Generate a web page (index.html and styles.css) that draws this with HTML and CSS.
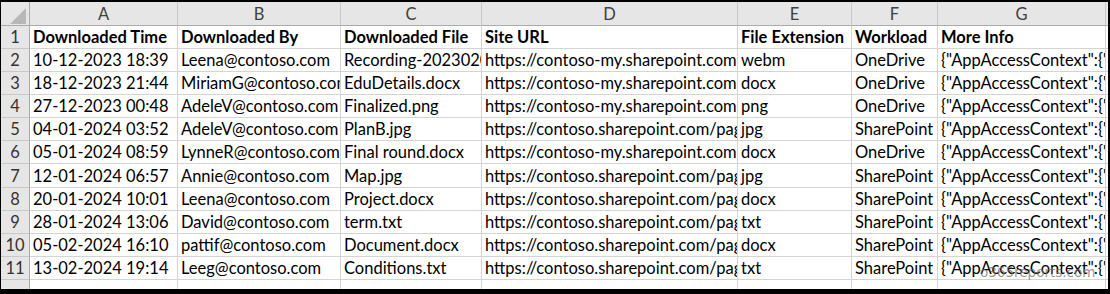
FILE: index.html
```html
<!DOCTYPE html>
<html>
<head>
<meta charset="utf-8">
<link rel="stylesheet" href="styles.css">
</head>
<body>
<div class="frame">
  <div class="sheet">
    <div class="ch corner"><svg width="28" height="23" viewBox="0 0 28 23"><polygon points="9,22 25,22 25,6" fill="#b8b8b8"/></svg></div>
    <div class="ch">A</div><div class="ch">B</div><div class="ch">C</div><div class="ch">D</div><div class="ch">E</div><div class="ch">F</div><div class="ch">G</div><div class="ch end"></div>

    <div class="rh">1</div>
    <div class="c b">Downloaded Time</div><div class="c b">Downloaded By</div><div class="c b">Downloaded File</div><div class="c b">Site URL</div><div class="c b">File Extension</div><div class="c b">Workload</div><div class="c b">More Info</div><div class="c end"></div>

    <div class="rh">2</div>
    <div class="c">10-12-2023 18:39</div><div class="c">Leena@contoso.com</div><div class="c">Recording-20230206_103015.webm</div><div class="c">https://contoso-my.sharepoint.com/personal/leena</div><div class="c">webm</div><div class="c">OneDrive</div><div class="c">{"AppAccessContext":{"ClientAppId"</div><div class="c end"></div>

    <div class="rh">3</div>
    <div class="c">18-12-2023 21:44</div><div class="c">MiriamG@contoso.com</div><div class="c">EduDetails.docx</div><div class="c">https://contoso-my.sharepoint.com/personal/miriamg</div><div class="c">docx</div><div class="c">OneDrive</div><div class="c">{"AppAccessContext":{"ClientAppId"</div><div class="c end"></div>

    <div class="rh">4</div>
    <div class="c">27-12-2023 00:48</div><div class="c">AdeleV@contoso.com</div><div class="c">Finalized.png</div><div class="c">https://contoso-my.sharepoint.com/personal/adelev</div><div class="c">png</div><div class="c">OneDrive</div><div class="c">{"AppAccessContext":{"ClientAppId"</div><div class="c end"></div>

    <div class="rh">5</div>
    <div class="c">04-01-2024 03:52</div><div class="c">AdeleV@contoso.com</div><div class="c">PlanB.jpg</div><div class="c">https://contoso.sharepoint.com/pages</div><div class="c">jpg</div><div class="c">SharePoint</div><div class="c">{"AppAccessContext":{"ClientAppId"</div><div class="c end"></div>

    <div class="rh">6</div>
    <div class="c">05-01-2024 08:59</div><div class="c">LynneR@contoso.com</div><div class="c">Final round.docx</div><div class="c">https://contoso-my.sharepoint.com/personal/lynner</div><div class="c">docx</div><div class="c">OneDrive</div><div class="c">{"AppAccessContext":{"ClientAppId"</div><div class="c end"></div>

    <div class="rh">7</div>
    <div class="c">12-01-2024 06:57</div><div class="c">Annie@contoso.com</div><div class="c">Map.jpg</div><div class="c">https://contoso.sharepoint.com/pages</div><div class="c">jpg</div><div class="c">SharePoint</div><div class="c">{"AppAccessContext":{"ClientAppId"</div><div class="c end"></div>

    <div class="rh">8</div>
    <div class="c">20-01-2024 10:01</div><div class="c">Leena@contoso.com</div><div class="c">Project.docx</div><div class="c">https://contoso.sharepoint.com/pages</div><div class="c">docx</div><div class="c">SharePoint</div><div class="c">{"AppAccessContext":{"ClientAppId"</div><div class="c end"></div>

    <div class="rh">9</div>
    <div class="c">28-01-2024 13:06</div><div class="c">David@contoso.com</div><div class="c">term.txt</div><div class="c">https://contoso.sharepoint.com/pages</div><div class="c">txt</div><div class="c">SharePoint</div><div class="c">{"AppAccessContext":{"ClientAppId"</div><div class="c end"></div>

    <div class="rh">10</div>
    <div class="c">05-02-2024 16:10</div><div class="c">pattif@contoso.com</div><div class="c">Document.docx</div><div class="c">https://contoso.sharepoint.com/pages</div><div class="c">docx</div><div class="c">SharePoint</div><div class="c">{"AppAccessContext":{"ClientAppId"</div><div class="c end"></div>

    <div class="rh">11</div>
    <div class="c">13-02-2024 19:14</div><div class="c">Leeg@contoso.com</div><div class="c">Conditions.txt</div><div class="c">https://contoso.sharepoint.com/pages</div><div class="c">txt</div><div class="c">SharePoint</div><div class="c">{"AppAccessContext":{"ClientAppId"</div><div class="c end"></div>

    <div class="rh last"></div>
    <div class="c last"></div><div class="c last"></div><div class="c last"></div><div class="c last"></div><div class="c last"></div><div class="c last"></div><div class="c last"></div><div class="c last end"></div>
  </div>
  <div class="watermark">o365reports.com</div>
</div>
</body>
</html>
```
FILE: styles.css
```css
html, body {
  margin: 0;
  padding: 0;
  background: #000;
}
.frame {
  position: relative;
  width: 1107px;
  height: 287px;
  margin: 2px 2px 5px 1px;
  background: #fff;
  overflow: hidden;
}
.sheet {
  display: grid;
  grid-template-columns: 29px 148px 163px 141px 256px 114px 86px 168px 2px;
  grid-template-rows: 24px 23px 23px 23px 23px 23px 23px 24px 23px 23px 23px 23px 9px;
  font-family: Lato, "Liberation Sans", sans-serif;
  font-size: 16.5px;
  color: #000;
}
.sheet > div {
  box-sizing: border-box;
  overflow: hidden;
  white-space: nowrap;
}
.ch {
  background: #e6e6e6;
  border-right: 1px solid #c8c8c8;
  border-bottom: 1px solid #ababab;
  color: #404040;
  display: flex;
  align-items: center;
  justify-content: center;
  line-height: 19px;
  padding-top: 1px;
}
.corner {
  border-right: 1px solid #ababab;
  padding: 0;
  align-items: flex-start;
  justify-content: flex-start;
}
.corner svg {
  display: block;
}
.rh {
  background: #e6e6e6;
  border-right: 1px solid #ababab;
  border-bottom: 1px solid #c8c8c8;
  color: #333;
  display: flex;
  align-items: flex-end;
  justify-content: center;
  line-height: 19px;
  padding-bottom: 1px;
}
.c {
  border-right: 1px solid #d4d4d4;
  border-bottom: 1px solid #d4d4d4;
  display: flex;
  align-items: flex-end;
  padding: 0 0 1px 3px;
  line-height: 19px;
}
.c.b {
  font-weight: 700;
}
.end {
  border-right: none;
}
.last {
  border-bottom: none;
}
.watermark {
  position: absolute;
  left: 979px;
  top: 261px;
  font-family: "DejaVu Sans", sans-serif;
  font-size: 13.5px;
  line-height: 18px;
  color: rgba(110, 110, 110, 0.72);
  white-space: nowrap;
}
```
